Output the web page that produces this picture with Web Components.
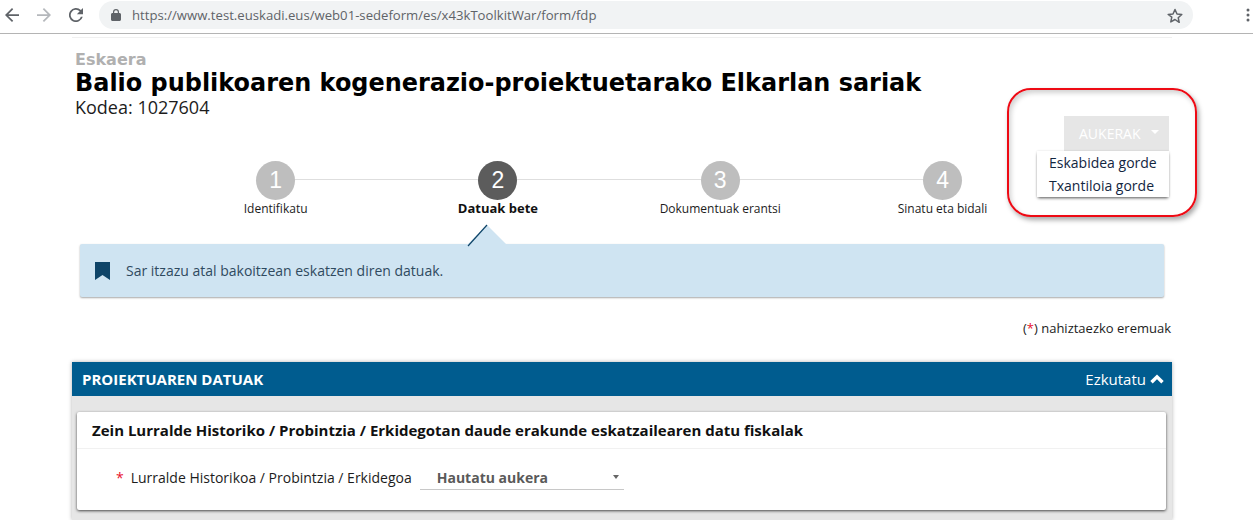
<!DOCTYPE html>
<html>
<head>
<meta charset="utf-8">
<title>Eskaera</title>
<style>
html, body { margin: 0; padding: 0; background: #fff; }
body { font-family: "Open Sans", sans-serif; color: #1c1c1c; height: 520px; overflow: hidden; }
</style>
</head>
<body>
<browser-bar url="https://www.test.euskadi.eus/web01-sedeform/es/x43kToolkitWar/form/fdp"></browser-bar>
<form-page>
  <page-head slot="head" kind="Eskaera" title-text="Balio publikoaren kogenerazio-proiektuetarako Elkarlan sariak" code="Kodea: 1027604"></page-head>
  <options-menu slot="menu"></options-menu>
  <step-bar slot="steps">
    <step-item num="1" label="Identifikatu"></step-item>
    <step-item num="2" label="Datuak bete" active></step-item>
    <step-item num="3" label="Dokumentuak erantsi"></step-item>
    <step-item num="4" label="Sinatu eta bidali"></step-item>
  </step-bar>
  <info-note slot="note">Sar itzazu atal bakoitzean eskatzen diren datuak.</info-note>
  <form-panel slot="panel" heading="PROIEKTUAREN DATUAK">
    <form-card heading="Zein Lurralde Historiko / Probintzia / Erkidegotan daude erakunde eskatzailearen datu fiskalak">
      <select-field label="Lurralde Historikoa / Probintzia / Erkidegoa" value="Hautatu aukera"></select-field>
    </form-card>
  </form-panel>
</form-page>

<script>
class BrowserBar extends HTMLElement {
  constructor() {
    super();
    this._root = this.attachShadow({ mode: 'open' });
    var url = this.getAttribute('url');
    this._root.innerHTML = `
    <style>
      :host { display: flex; align-items: center; height: 30px; padding-bottom: 3px; border-bottom: 1px solid #b4b4b4; background: #fff; }
      svg { display: block; flex: none; }
      #back { margin-left: 5px; }
      #forward { margin-left: 18px; }
      #reload { margin-left: 18px; }
      #omni { flex: none; display: flex; align-items: center; width: 1094px; height: 28px; margin-left: 16px; background: #f1f3f4; border-radius: 14px; box-sizing: border-box; padding: 0 10px 0 12px; }
      #url { margin-left: 11px; font: 13.15px "Open Sans", sans-serif; color: #5f6368; flex: 1; white-space: nowrap; }
      #dots { margin-left: 53px; }
    </style>
    <svg id="back" width="14" height="14" viewBox="0 0 16 16"><path d="M16 7H3.800l5.600-5.600L8 0 0 8l8 8 1.400-1.400L3.800 9H16z" fill="#5f6368"/></svg>
    <svg id="forward" width="14" height="14" viewBox="0 0 16 16"><path d="M0 7h12.200L6.600 1.400 8 0l8 8-8 8-1.400-1.400L12.200 9H0z" fill="#b5b8bc"/></svg>
    <svg id="reload" width="14" height="14" viewBox="0 0 16 16"><path d="M13.600 2.400A8 8 0 1 0 15.700 10h-2.100a6 6 0 1 1-1.400-6.200L9 7h7V0z" fill="#5f6368"/></svg>
    <div id="omni">
      <svg width="10" height="12" viewBox="0 0 10 12"><path d="M8.500 4H8V3a3 3 0 0 0-6 0v1h-.5C.7 4 0 4.700 0 5.500v5C0 11.300.7 12 1.500 12h7c.8 0 1.500-.7 1.500-1.500v-5C10 4.700 9.300 4 8.500 4zM3.200 4V3a1.800 1.800 0 0 1 3.600 0v1z" fill="#5f6368"/></svg>
      <span id="url"></span>
      <svg width="16" height="15" viewBox="0 0 16 15"><path d="M8 1.500l2 4.500 4.800.5-3.600 3.200 1 4.700L8 11.500l-4.200 2.400 1-4.700L1.200 6.500 6 6z" fill="none" stroke="#5f6368" stroke-width="1.500" stroke-linejoin="round"/></svg>
    </div>
    <svg id="dots" width="4" height="14" viewBox="0 0 4 14"><circle cx="2" cy="2" r="1.500" fill="#5f6368"/><circle cx="2" cy="7" r="1.500" fill="#5f6368"/><circle cx="2" cy="12" r="1.500" fill="#5f6368"/></svg>
    `;
    this._root.querySelector('#url').textContent = url;
  }
}
window.customElements.define('browser-bar', BrowserBar);

class FormPage extends HTMLElement {
  constructor() {
    super();
    this._root = this.attachShadow({ mode: 'open' });
    this._root.innerHTML = `
    <style>
      :host { display: block; width: 1100px; margin-left: 72px; padding-top: 3px; position: relative; }
      #rule { height: 1px; background: #f0f0f0; }
      #top { padding: 14px 0 0 3px; height: 123px; box-sizing: border-box; }
      #note { padding: 0 8px; }
      #req { margin-top: 22px; height: 43px; padding-right: 1px; text-align: right; font-size: 13px; color: #1c1c1c; }
      #req span { color: #e8112d; }
      #menu { position: absolute; right: 0; top: 3px; }
    </style>
    <div id="rule"></div>
    <div id="top"><slot name="head"></slot></div>
    <slot name="steps"></slot>
    <div id="note"><slot name="note"></slot></div>
    <div id="req">(<span>*</span>) nahiztaezko eremuak</div>
    <slot name="panel"></slot>
    <div id="menu"><slot name="menu"></slot></div>
    `;
  }
}
window.customElements.define('form-page', FormPage);

class PageHead extends HTMLElement {
  constructor() {
    super();
    this._root = this.attachShadow({ mode: 'open' });
    this._root.innerHTML = `
    <style>
      :host { display: block; }
      #kind { font: bold 16px/16px "DejaVu Sans", sans-serif; color: #b0b0b0; }
      h1 { margin: 0; font: bold 23.95px/30px "DejaVu Sans", sans-serif; color: #000; white-space: nowrap; }
      #code { font: 18px/18px "Open Sans", sans-serif; color: #1c1c1c; }
    </style>
    <div id="kind"></div>
    <h1></h1>
    <div id="code"></div>
    `;
    this._root.querySelector('#kind').textContent = this.getAttribute('kind');
    this._root.querySelector('h1').textContent = this.getAttribute('title-text');
    this._root.querySelector('#code').textContent = this.getAttribute('code');
  }
}
window.customElements.define('page-head', PageHead);

class OptionsMenu extends HTMLElement {
  constructor() {
    super();
    this._root = this.attachShadow({ mode: 'open' });
    this._root.innerHTML = `
    <style>
      :host { display: block; font-family: "Open Sans", sans-serif; }
      #callout { position: absolute; left: -165px; top: 51px; width: 186px; height: 125px; border: 2px solid #ee0a14; border-radius: 24px; box-shadow: 2px 3px 5px rgba(0,0,0,.35), inset 2px 3px 5px rgba(0,0,0,.18); }
      #btn { position: absolute; left: -108px; top: 79px; width: 105px; height: 35px; background: #e6e6e6; color: #fff; font-size: 14px; box-sizing: border-box; padding: 8px 0 0 15px; white-space: nowrap; }
      #btn i { position: absolute; left: 87px; top: 14px; width: 0; height: 0; border: 4px solid transparent; border-top: 4px solid #fff; border-bottom: 0; }
      #list { position: absolute; left: -135px; top: 114px; width: 132px; height: 46px; background: #fff; box-shadow: 0 2px 3px -1px rgba(0,0,0,.65), 0 0 2px rgba(0,0,0,.12); font-size: 14px; line-height: 23px; color: #12263f; white-space: nowrap; }
      #list div { padding-left: 12px; }
    </style>
    <div id="callout"></div>
    <div id="btn">AUKERAK<i></i></div>
    <div id="list"><div>Eskabidea gorde</div><div>Txantiloia gorde</div></div>
    `;
  }
}
window.customElements.define('options-menu', OptionsMenu);

class StepBar extends HTMLElement {
  constructor() {
    super();
    this._root = this.attachShadow({ mode: 'open' });
    this._root.innerHTML = `
    <style>
      :host { display: block; height: 83px; padding-left: 92.500px; position: relative; }
      #items { display: grid; grid-template-columns: repeat(4, 222.300px); }
      #line { position: absolute; left: 204px; width: 666px; top: 18px; height: 1px; background: #dedede; }
    </style>
    <div id="line"></div>
    <div id="items"><slot></slot></div>
    `;
  }
}
window.customElements.define('step-bar', StepBar);

class StepItem extends HTMLElement {
  constructor() {
    super();
    this._root = this.attachShadow({ mode: 'open' });
    this._root.innerHTML = `
    <style>
      :host { display: flex; flex-direction: column; align-items: center; position: relative; font-family: "Open Sans", sans-serif; }
      #num { width: 39px; height: 39px; border-radius: 50%; background: #bebebe; color: #fff; font: 23px/39px "Liberation Sans", sans-serif; text-align: center; }
      #label { margin-top: 1px; font-size: 12px; line-height: 16px; color: #1c1c1c; white-space: nowrap; }
      :host([active]) #num { background: #5c5c5c; }
      :host([active]) #label { margin-top: 0; font-weight: 700; font-size: 13px; color: #111; }
      #tip { display: none; position: absolute; left: 81px; top: 64px; width: 38px; height: 19px; overflow: visible; }
      :host([active]) #tip { display: block; }
    </style>
    <div id="num"></div>
    <div id="label"></div>
    <svg id="tip" viewBox="0 0 38 19"><path d="M19 0L38 19H0z" fill="#cfe4f2"/><path d="M19 0L0 21" stroke="#0e4468" stroke-width="1.200" fill="none"/></svg>
    `;
    this._root.querySelector('#num').textContent = this.getAttribute('num');
    this._root.querySelector('#label').textContent = this.getAttribute('label');
  }
}
window.customElements.define('step-item', StepItem);

class InfoNote extends HTMLElement {
  constructor() {
    super();
    this._root = this.attachShadow({ mode: 'open' });
    this._root.innerHTML = `
    <style>
      :host { display: flex; align-items: center; height: 53px; background: #cfe4f2; border-radius: 2px; box-shadow: 0 1px 2px rgba(0,0,0,.35); font: 14px "Open Sans", sans-serif; color: #2f4a60; padding-left: 15px; box-sizing: border-box; }
      svg { flex: none; margin-right: 16px; }
    </style>
    <svg width="15" height="18" viewBox="0 0 15 18"><path d="M0 0h15v18l-7.500-5L0 18z" fill="#0e4468"/></svg>
    <slot></slot>
    `;
  }
}
window.customElements.define('info-note', InfoNote);

class FormPanel extends HTMLElement {
  constructor() {
    super();
    this._root = this.attachShadow({ mode: 'open' });
    this._root.innerHTML = `
    <style>
      :host { display: block; background: #e6e6e6; box-shadow: 0 0 4px rgba(0,0,0,.3); height: 158px; font-family: "Open Sans", sans-serif; }
      #bar { display: flex; align-items: center; justify-content: space-between; height: 34px; background: #005c8f; color: #fff; padding: 0 8px 0 10px; }
      #title { font-size: 15px; font-weight: 700; }
      #toggle { display: flex; align-items: center; font-size: 15px; gap: 4px; }
      #body { padding: 16px 6px 0 5px; }
    </style>
    <div id="bar">
      <span id="title"></span>
      <span id="toggle">Ezkutatu <svg width="14" height="10" viewBox="0 0 14 10"><path d="M1.500 8.300L7 2.800 12.500 8.300" fill="none" stroke="#fff" stroke-width="3.400"/></svg></span>
    </div>
    <div id="body"><slot></slot></div>
    `;
    this._root.querySelector('#title').textContent = this.getAttribute('heading');
  }
}
window.customElements.define('form-panel', FormPanel);

class FormCard extends HTMLElement {
  constructor() {
    super();
    this._root = this.attachShadow({ mode: 'open' });
    this._root.innerHTML = `
    <style>
      :host { display: block; background: #fff; border-radius: 2px; box-shadow: 0 1px 3px rgba(0,0,0,.7); font-family: "Open Sans", sans-serif; }
      #head { height: 36px; line-height: 36px; padding-left: 15px; font-size: 15px; font-weight: 700; color: #111; border-bottom: 1px solid #f1f1f1; white-space: nowrap; }
      #body { height: 61px; padding: 17px 0 0 39px; box-sizing: border-box; }
    </style>
    <div id="head"></div>
    <div id="body"><slot></slot></div>
    `;
    this._root.querySelector('#head').textContent = this.getAttribute('heading');
  }
}
window.customElements.define('form-card', FormCard);

class SelectField extends HTMLElement {
  constructor() {
    super();
    this._root = this.attachShadow({ mode: 'open' });
    this._root.innerHTML = `
    <style>
      :host { display: flex; align-items: flex-start; font: 14px/24px "Open Sans", sans-serif; color: #1c1c1c; white-space: nowrap; }
      #star { color: #e8112d; margin-right: 7px; }
      #sel { position: relative; width: 204px; height: 24px; margin-left: 8px; border-bottom: 1px solid #c8c8c8; box-sizing: border-box; padding-left: 17px; font-weight: 700; color: #5a5a5a; }
      #sel i { position: absolute; left: 193px; top: 9px; width: 0; height: 0; border: 3.500px solid transparent; border-top: 4px solid #666; border-bottom: 0; }
    </style>
    <span id="star">*</span>
    <span id="label"></span>
    <div id="sel"><span id="val"></span><i></i></div>
    `;
    this._root.querySelector('#label').textContent = this.getAttribute('label');
    this._root.querySelector('#val').textContent = this.getAttribute('value');
  }
}
window.customElements.define('select-field', SelectField);
</script>
</body>
</html>
